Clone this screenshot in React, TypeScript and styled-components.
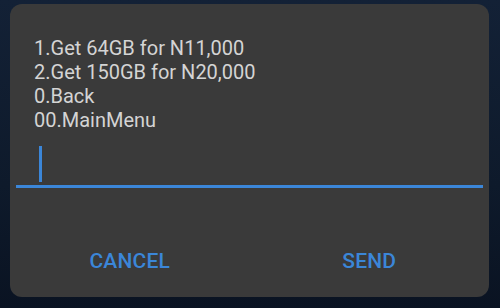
import React from 'react';
import styled, { createGlobalStyle } from 'styled-components';

const GlobalStyle = createGlobalStyle`
  html, body {
    margin: 0;
    padding: 0;
    width: 500px;
    height: 308px;
    overflow: hidden;
    background: #0f1b2d;
    font-family: Roboto, "Noto Sans", Arial, sans-serif;
  }
`;

const options = [
  '1.Get 64GB for N11,000',
  '2.Get 150GB for N20,000',
  '0.Back',
  '00.MainMenu',
];

function App() {
  return (
    <Screen>
      <GlobalStyle />
      <Dialog>
        <Message>
          {options.map((line) => (
            <Line key={line}>{line}</Line>
          ))}
        </Message>
        <InputField>
          <Cursor />
        </InputField>
        <Actions>
          <ActionButton>CANCEL</ActionButton>
          <ActionButton>SEND</ActionButton>
        </Actions>
      </Dialog>
    </Screen>
  );
}

const Screen = styled.div`
  width: 500px;
  height: 308px;
  box-sizing: border-box;
  padding: 4px 11px 11px 10px;
  background: linear-gradient(180deg, #132136 0%, #0e1a2b 60%, #0a1322 100%);
`;

const Dialog = styled.div`
  height: 293px;
  box-sizing: border-box;
  background: #3a3a3a;
  border-radius: 12px;
  display: flex;
  flex-direction: column;
  padding-top: 32px;
`;

const Message = styled.div`
  padding: 0 24px;
  display: flex;
  flex-direction: column;
`;

const Line = styled.div`
  color: #d4d4d4;
  font-size: 20px;
  line-height: 24px;
`;

const InputField = styled.div`
  margin: 12px 6px 0;
  height: 41px;
  border-bottom: 3px solid #3b86d8;
  display: flex;
  align-items: flex-end;
  padding-left: 23px;
`;

const Cursor = styled.div`
  width: 3px;
  height: 36px;
  margin-bottom: 3px;
  background: #3b86d8;
`;

const Actions = styled.div`
  flex: 1;
  display: flex;
  align-items: center;
  padding-top: 36px;
`;

const ActionButton = styled.div`
  flex: 1;
  text-align: center;
  color: #3b86d8;
  font-size: 21px;
  font-weight: 500;
  letter-spacing: 0.2px;
`;

export default App;
